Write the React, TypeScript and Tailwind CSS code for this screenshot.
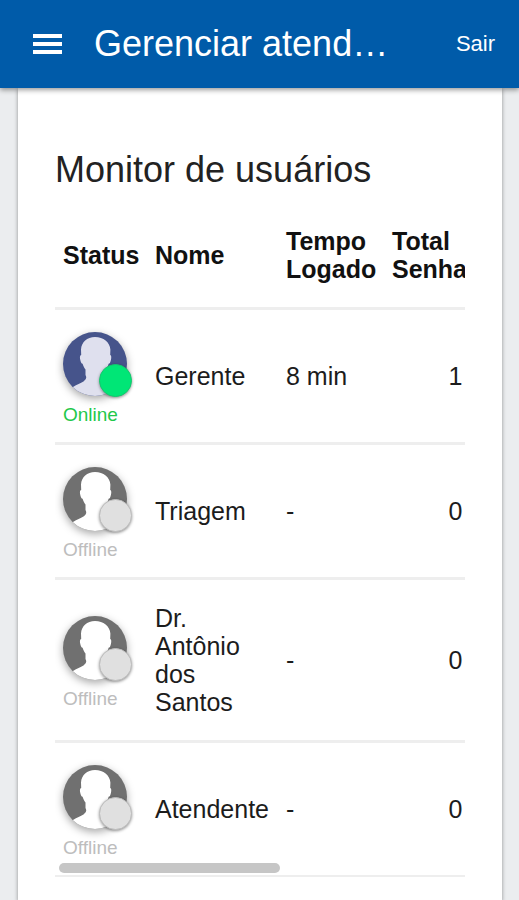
import clsx from "clsx";

type User = {
  name: string;
  online: boolean;
  time: string;
  total: number;
};

const users: User[] = [
  { name: "Gerente", online: true, time: "8 min", total: 1 },
  { name: "Triagem", online: false, time: "-", total: 0 },
  { name: "Dr. Antônio dos Santos", online: false, time: "-", total: 0 },
  { name: "Atendente", online: false, time: "-", total: 0 },
];

function Avatar({ online }: { online: boolean }) {
  return (
    <div className="relative w-16 h-16">
      <svg
        viewBox="0 0 64 64"
        className={clsx(
          "w-16 h-16 rounded-full shadow-[0_3px_8px_rgba(0,0,0,0.35)]",
          online ? "bg-[#46548b]" : "bg-[#707070]"
        )}
        aria-hidden="true"
      >
        <path
          className={online ? "fill-[#dfe0ee]" : "fill-white"}
          d="M32 5C24 5 18.500 10 18 17.500L18.200 23C16.700 23.300 16.700 25.500 17.300 28C17.800 30.500 18.500 31.500 19.600 31.800C20.200 34 21.200 36 22.500 37.500V43C23.800 45.500 23.500 47 20.500 49.500C17.500 51.500 14 52.500 10 55V64H56V55C50 52.500 44 50 43 44V37.500C44.300 36 45.200 34 45.600 31.800C46.800 31.500 47.400 30.500 47.900 28C48.500 25.500 48.500 23.300 47.200 23L47.400 17.500C46.800 10 40.500 5 32 5Z"
        />
      </svg>
      <span
        className={clsx(
          "absolute -right-[5px] -bottom-px w-[33px] h-[33px] rounded-full border shadow-[0_1px_3px_rgba(0,0,0,0.4)]",
          online ? "bg-[#00e676] border-[#14c86e]" : "bg-[#e0e0e0] border-[#bdbdbd]"
        )}
      />
    </div>
  );
}

function UserRow({ user }: { user: User }) {
  return (
    <tr className="border-b-3 border-[#eeeeee] last:border-b-2">
      <td className="pt-[22px] pb-[17px] px-2">
        <Avatar online={user.online} />
        <p
          className={clsx(
            "mt-[9px] text-[19px] leading-5",
            user.online ? "text-[#1fc84b]" : "text-[#bdbdbd]"
          )}
        >
          {user.online ? "Online" : "Offline"}
        </p>
      </td>
      <td className="py-6 px-2">{user.name}</td>
      <td className="py-6 px-2">{user.time}</td>
      <td className="py-6 px-2 text-center">{user.total}</td>
    </tr>
  );
}

export default function App() {
  return (
    <div className="flex flex-col min-h-screen bg-[#ebedef] font-['Liberation_Sans',Arial,sans-serif] text-[#1c1c1c]">
      <header className="relative z-10 flex items-center gap-8 h-22 pl-8 pr-6 bg-[#005ba9] text-white shadow-[0_2px_5px_rgba(0,0,0,0.4)]">
        <button type="button" aria-label="Menu" className="shrink-0">
          <svg width="30" height="20" viewBox="0 0 30 20" fill="currentColor">
            <path d="M1 0H30V4H1ZM1 8H30V12H1ZM1 16H30V20H1Z" />
          </svg>
        </button>
        <h1 className="flex-1 truncate text-[36px] leading-11">Gerenciar atend…</h1>
        <button type="button" className="text-[22px] leading-7">
          Sair
        </button>
      </header>

      <main className="flex-1 ml-[18px] mr-[17px] px-[37px] pt-[60px] pb-6 bg-white shadow-[0_1px_4px_rgba(0,0,0,0.4)]">
        <h2 className="text-[36px] leading-11 text-[#222222]">Monitor de usuários</h2>
        <div className="relative mt-[11px]">
          <div className="overflow-x-auto [scrollbar-width:none]">
            <table className="table-fixed w-[472px] text-[25px] leading-7 text-left">
              <colgroup>
                <col className="w-[92px]" />
                <col className="w-[131px]" />
                <col className="w-[106px]" />
                <col className="w-[143px]" />
              </colgroup>
              <thead>
                <tr className="border-b-3 border-[#eeeeee] text-[#111111]">
                  <th className="py-6 px-2">Status</th>
                  <th className="py-6 px-2">Nome</th>
                  <th className="py-6 px-2">
                    Tempo
                    <br />
                    Logado
                  </th>
                  <th className="py-6 px-2">
                    Total
                    <br />
                    Senhas
                  </th>
                </tr>
              </thead>
              <tbody>
                {users.map((user) => (
                  <UserRow key={user.name} user={user} />
                ))}
              </tbody>
            </table>
          </div>
          {/* scroll thumb */}
          <div className="absolute left-1 bottom-1 w-[54%] h-2.5 rounded-full bg-[#c6c6c6]" />
        </div>
      </main>
    </div>
  );
}
